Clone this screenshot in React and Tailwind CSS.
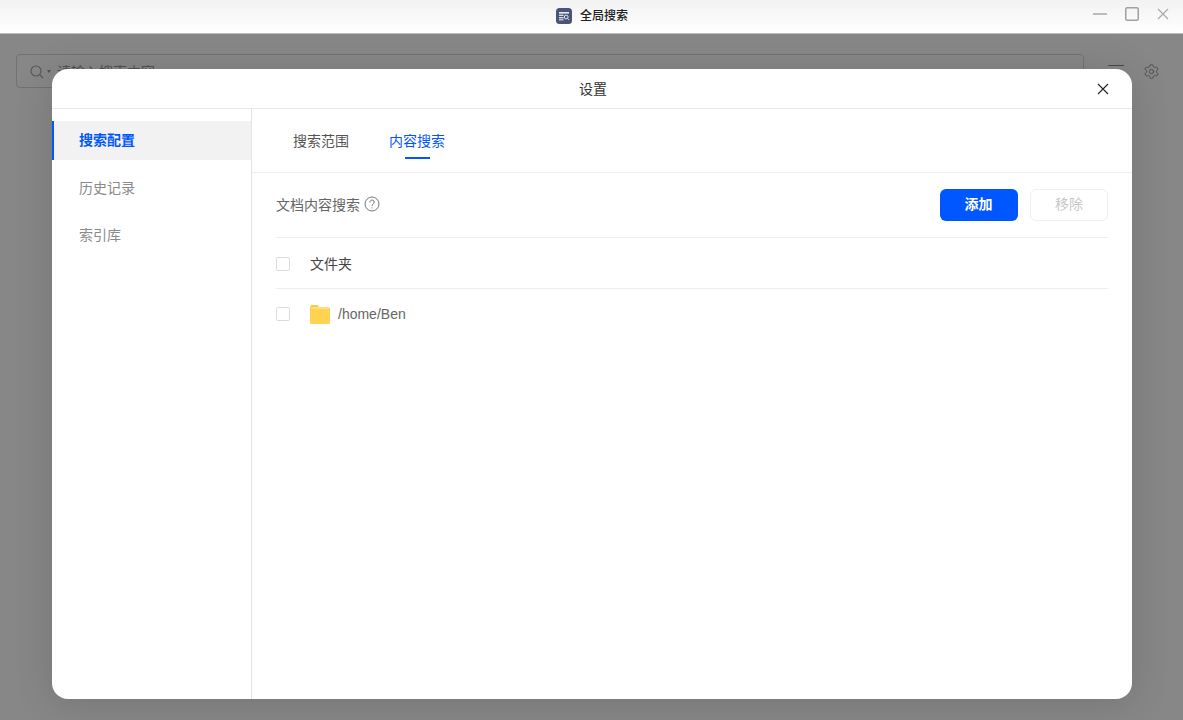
import React from "react";
import { Settings } from "lucide-react";

function Checkbox() {
  return <span className="block w-[14px] h-[14px] rounded-[2px] border border-[#dcdcdc] bg-white shrink-0" />;
}

function AppIcon() {
  return (
    <svg width="16" height="16" viewBox="0 0 16 16">
      <rect width="16" height="16" rx="3.5" fill="#4a5378" />
      <rect x="3" y="4" width="10" height="1.6" fill="#e8eaf2" />
      <rect x="3" y="6.6" width="4.5" height="1.4" fill="#d5d8e6" />
      <rect x="3" y="9" width="4.5" height="1.4" fill="#d5d8e6" />
      <rect x="3" y="11.2" width="4.5" height="1.2" fill="#d5d8e6" />
      <circle cx="10.2" cy="9" r="1.9" fill="none" stroke="#e8eaf2" strokeWidth="1" />
      <path d="M11.6 10.4 13 11.9" stroke="#e8eaf2" strokeWidth="1" />
    </svg>
  );
}

function FolderIcon() {
  return (
    <svg width="20" height="20" viewBox="0 0 20 20">
      <path d="M0 3a2 2 0 0 1 2-2h4.6c.6 0 1 .2 1.4.6L9.2 3H18a2 2 0 0 1 2 2v13a2 2 0 0 1-2 2H2a2 2 0 0 1-2-2z" fill="#ffc93c" />
      <rect x="0" y="5" width="20" height="15" rx="2" fill="#ffd34f" />
      <rect x="1" y="3.4" width="18" height="1.2" rx=".6" fill="#fff3c9" />
    </svg>
  );
}

export default function App() {
  return (
    <div className="relative w-[1183px] h-[720px] overflow-hidden bg-white font-['Liberation_Sans','Noto_Sans_CJK_SC',sans-serif]">
      <header className="relative h-[34px] border-b border-[#bdbdbd] bg-gradient-to-b from-[#f2f2f2] to-white flex items-center justify-center">
        <div className="flex items-center gap-2 mb-[2px] ml-[1px]">
          <AppIcon />
          <span className="text-[12px] text-[#222] font-medium">全局搜索</span>
        </div>
        <div className="absolute right-[14px] top-0 h-[28px] flex items-center gap-[18px]">
          <svg width="14" height="14" viewBox="0 0 14 14"><path d="M0 7h14" stroke="#a8a8a8" strokeWidth="1.5" /></svg>
          <svg width="14" height="14" viewBox="0 0 14 14"><rect x=".75" y=".75" width="12.5" height="12.5" rx="1.5" fill="none" stroke="#a0a0a0" strokeWidth="1.5" /></svg>
          <svg width="12" height="12" viewBox="0 0 12 12"><path d="M1 1l10 10M11 1 1 11" stroke="#a8a8a8" strokeWidth="1.1" /></svg>
        </div>
      </header>

      <div className="h-[686px] bg-white px-4 pt-5 flex items-start gap-[24px]">
        <div className="w-[1068px] h-[34px] rounded border border-[#d8d8d8] flex items-center pl-[12px] gap-[2px] text-[14px] text-[#999]">
          <svg width="16" height="16" viewBox="0 0 16 16" fill="none" stroke="#a0a0a0" strokeWidth="1.1" className="mt-[2px]"><circle cx="7" cy="7" r="5" /><path d="m11 11 3 3" /></svg>
          <span className="w-0 h-0 border-x-[2px] border-t-[3px] border-x-transparent border-t-[#999] mr-[4px]" />
          <span className="mt-[3px]">请输入搜索内容</span>
        </div>
        <div className="flex items-center gap-[19px] h-[34px]">
          <span className="block w-4 h-[10px] border-y border-[#888] mt-[-3px]" />
          <Settings size={17} strokeWidth={1.2} color="#888" />
        </div>
      </div>

      {/* dimming overlay with the settings dialog on top */}
      <div className="absolute left-0 right-0 top-[34px] bottom-0 bg-[#000000]/[0.47] flex items-start justify-center pt-[35px]">
        <div className="w-[1080px] h-[630px] ml-[1px] rounded-[16px] bg-white overflow-hidden flex flex-col shadow-[0_4px_40px_rgba(0,0,0,0.14)]">
          <div className="relative h-[40px] shrink-0 border-b border-[#e8e8e8] flex items-center justify-center text-[14px] text-[#333]">
            <span className="mt-[2px] ml-[2px]">设置</span>
            <svg className="absolute right-[23px] top-[14px]" width="12" height="12" viewBox="0 0 12 12"><path d="M1 1l10 10M11 1 1 11" stroke="#222" strokeWidth="1.1" /></svg>
          </div>
          <div className="flex-1 flex min-h-0">
            <aside className="w-[200px] shrink-0 border-r border-[#e5e5e5] pt-[12px] text-[14px] text-[#8a8a8a]">
              <div className="h-[39px] flex items-center pl-[25px] border-l-2 border-[#0057ff] bg-[#f2f2f2] text-[#0057ff] font-bold">搜索配置</div>
              <div className="h-[47px] mt-[5px] flex items-center pl-[27px]">历史记录</div>
              <div className="h-[47px] flex items-center pl-[27px]">索引库</div>
            </aside>
            <main className="flex-1 min-w-0">
              <div className="h-[64px] border-b border-[#f0f0f0] flex items-start pl-[41px] gap-[40px] text-[14px]">
                <div className="h-[64px] pt-[24px] leading-[17px] text-[#555]">搜索范围</div>
                <div className="relative h-[64px] pt-[24px] leading-[17px] text-[#0057ff]">
                  内容搜索
                  <span className="absolute left-[16px] top-[48px] w-[25px] h-[2px] bg-[#0057ff]" />
                </div>
              </div>
              <div className="px-[24px]">
                <div className="h-[65px] border-b border-[#eeeeee] flex items-center justify-between">
                  <div className="flex items-center gap-[4px] text-[14px] text-[#666]">
                    <span className="mt-[1px]">文档内容搜索</span>
                    <svg width="16" height="16" viewBox="0 0 16 16" fill="none" stroke="#777" strokeWidth="1" className="mb-[2px]">
                      <circle cx="8" cy="8" r="7" />
                      <path d="M5.8 6.2a2.2 2.2 0 1 1 3.4 1.8c-.8.5-1.2.9-1.2 1.7" strokeLinecap="round" />
                      <circle cx="8" cy="11.8" r=".6" fill="#777" stroke="none" />
                    </svg>
                  </div>
                  <div className="flex items-center gap-[12px] text-[14px] mt-[-1px]">
                    <button className="w-[78px] h-[32px] pr-[1px] rounded-[6px] bg-[#0057ff] text-white font-bold">添加</button>
                    <button className="w-[78px] h-[32px] rounded-[6px] border border-[#eeeeee] bg-white text-[#c8c8c8]">移除</button>
                  </div>
                </div>
                <div className="h-[51px] pt-[2px] border-b border-[#eeeeee] flex items-center gap-[20px] text-[14px] text-[#444]">
                  <Checkbox />
                  <span>文件夹</span>
                </div>
                <div className="h-[50px] flex items-center gap-[20px] text-[14px] text-[#666]">
                  <Checkbox />
                  <div className="flex items-center gap-[8px]">
                    <FolderIcon />
                    <span>/home/Ben</span>
                  </div>
                </div>
              </div>
            </main>
          </div>
        </div>
      </div>
    </div>
  );
}
